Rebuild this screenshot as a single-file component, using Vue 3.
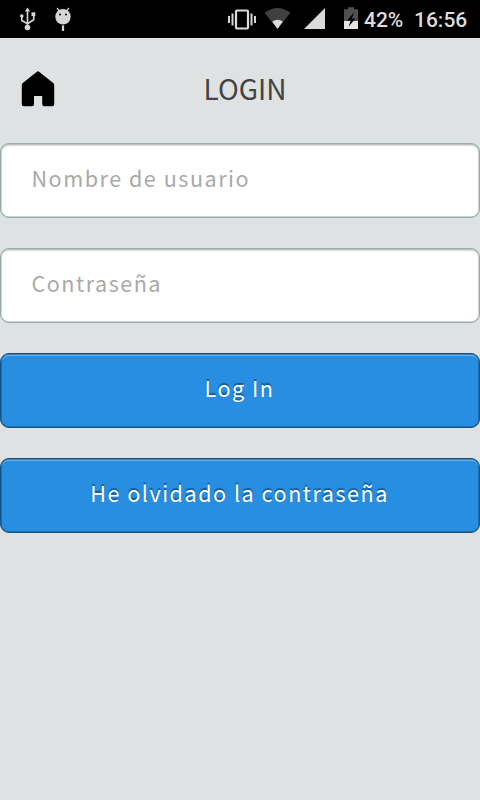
<script setup>
import { ref } from 'vue'

const username = ref('')
const password = ref('')
</script>

<template>
  <div class="screen">
    <div class="status">
      <svg class="icons" width="360" height="38" viewBox="0 0 360 38">
        <g fill="none" stroke="#d5d5d5" stroke-width="1.6">
          <path d="M27.5 10V27M21.8 17v3.5l5.7 3.2 6.2-4V16" />
        </g>
        <g fill="#d5d5d5">
          <path d="M27.5 7.5l2.6 4h-5.2z" />
          <circle cx="27.5" cy="27.5" r="2.8" />
          <circle cx="21.8" cy="16.1" r="1.8" />
          <rect x="31.5" y="12.3" width="3.8" height="3.8" />
          <circle cx="63" cy="16.7" r="7.7" />
          <rect x="61.9" y="25.4" width="2.2" height="5.6" />
        </g>
        <path d="M57 8l2.5 3M69 8l-2.5 3" stroke="#d5d5d5" stroke-width="1.2" />
        <circle cx="60" cy="14.5" r="1" />
        <circle cx="66" cy="14.5" r="1" />
        <rect x="236" y="10.5" width="12" height="18" rx="1" fill="none" stroke="#dcdcdc" stroke-width="2.2" />
        <path d="M232.5 13.5v12M251.5 13.5v12M229 16v7M255 16v7" stroke="#d5d5d5" stroke-width="2" />
        <path d="M277.5 29L264.6 12.8Q277.5 3.2 290.4 12.8z" fill="#404040" />
        <path d="M277.5 29L272.3 21.6Q277.5 17.8 282.9 21.6z" fill="#dcdcdc" />
        <path d="M304 29L325 8v21z" fill="#d9d9d9" />
        <path d="M344 9.2h4V7.3h6v1.9h4V21h-14z" fill="#505050" />
        <path d="M344 21h14v8h-14z" fill="#e4e4e4" />
        <path d="M354 12.5l-7 8h3.8l-2.3 6.2 7-8.3h-3.6z" fill="#000" />
      </svg>
      <span class="battery">42%</span>
      <span class="clock">16:56</span>
    </div>

    <header class="header">
      <svg class="home" width="34" height="36" viewBox="0 0 34 36">
        <path d="M15.6 .9Q17 -.3 18.4 .9L32.2 12q1 .8 1 2.2V33.2q0 2-2 2H23.2q-2 0-2-2V25H13v8.2q0 2-2 2H2.8Q.8 35.2 .8 33.2V14.2q0-1.4 1-2.2z" />
      </svg>
      <h1 class="title">LOGIN</h1>
    </header>

    <form class="form" @submit.prevent>
      <input v-model="username" class="control field" type="text" placeholder="Nombre de usuario" />
      <input v-model="password" class="control field" type="password" placeholder="Contraseña" />
      <button class="control action" type="submit">Log In</button>
      <button class="control action" type="button">He olvidado la contraseña</button>
    </form>
  </div>
</template>

<style>
body {
  background: #dee2e3;
}
</style>

<style scoped>
.screen {
  min-height: 800px;
  background: #dee2e3;
  font-family: "Noto Sans CJK SC", sans-serif;
}
.status {
  display: flex;
  align-items: center;
  height: 38px;
  background: #000;
  color: #dcdcdc;
  font: 500 21px/38px Roboto, sans-serif;
  white-space: nowrap;
}
.icons {
  flex: none;
}
.battery {
  width: 50px;
  padding: 2px 0 0 4px;
  box-sizing: border-box;
}
.clock {
  padding: 2px 0 0 4px;
}
.header {
  display: grid;
  grid-template-columns: 65px 1fr 55px;
  align-items: center;
  height: 105px;
}
.home {
  margin-left: 21px;
  margin-top: -4px;
}
.title {
  margin: -5px 0 0;
  text-align: center;
  color: #444;
  font-size: 28px;
  font-weight: 400;
  line-height: 40px;
}
.form {
  display: flex;
  flex-direction: column;
  gap: 30px;
}
.control {
  box-sizing: border-box;
  width: 100%;
  height: 75px;
  margin: 0;
  border-radius: 9px;
  outline: none;
  font-family: inherit;
  font-size: 21.6px;
  letter-spacing: 1.5px;
}
.field {
  padding: 0 30.5px 6px;
  border: 1px solid #9aacaa;
  background: #fff;
  box-shadow: inset 0 0 0 0.5px #9aacaa, inset 0 2px 1px #dadada;
  color: #444;
}
.field::placeholder {
  color: #a9a9a9;
  opacity: 1;
}
.action {
  padding: 0 1px 6px 0;
  border: 1px solid #145284;
  background: #288ee1;
  box-shadow: inset 0 0 0 0.5px #145284, inset 0 2px 0 #69afe8;
  color: #fff;
  text-shadow: 0 -2px 1px rgba(20, 82, 132, 0.9);
}
</style>
